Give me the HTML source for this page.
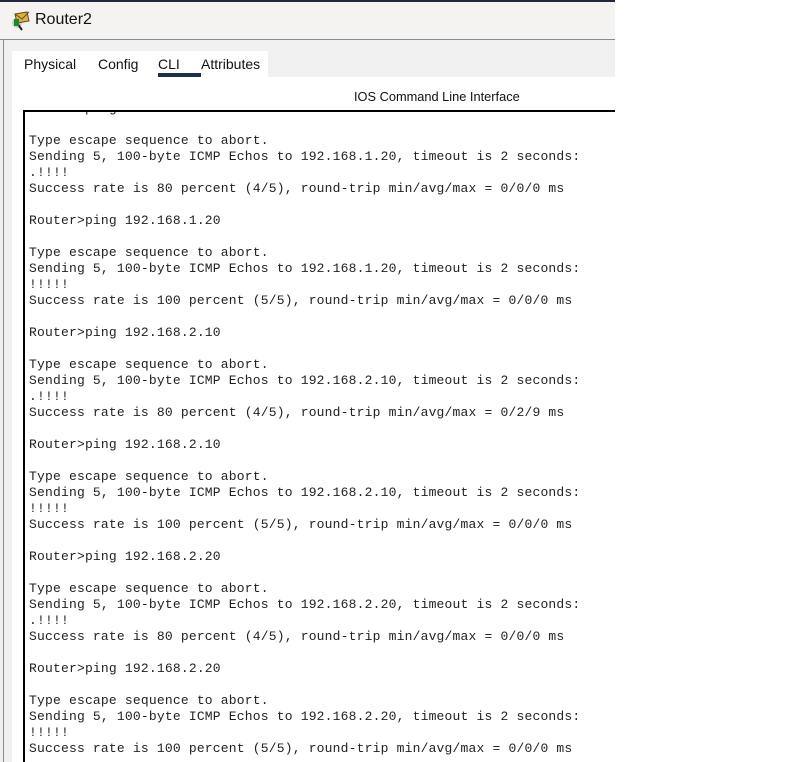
<!DOCTYPE html>
<html style="overflow:hidden"><head><style>
html,body{overflow:hidden}
body{margin:0;width:804px;height:762px;background:#fff;position:relative;overflow:hidden;font-family:"Liberation Sans",sans-serif}
.win{position:absolute;left:0;top:0;width:615px;height:762px;background:#f0f0f0;overflow:hidden}
.topb{position:absolute;left:0;top:0;width:615px;height:2px;background:#1f2a3c}
.title{position:absolute;left:0;top:2px;width:615px;height:37px;background:#f5f2f2;border-bottom:1px solid #8a8a8a}
.title span{position:absolute;left:35px;font-size:16px;color:#111}
.lb{position:absolute;left:3px;top:40px;width:1px;height:724px;background:#8a8a8a}
.tabs{position:absolute;left:12px;top:51px;width:256px;height:26px;background:#fff}
.tab{position:absolute;top:5px;font-size:14px;color:#111}
.ul{position:absolute;left:146px;top:22px;width:43px;height:4px;background:#1c2f4f}
.main{position:absolute;left:12px;top:77px;width:603px;height:686px;background:#fff}
.hdr{position:absolute;left:354px;top:89px;font-size:12.8px;color:#111}
.term{position:absolute;left:23px;top:110px;width:592px;height:660px;border-left:2px solid #000;border-top:2px solid #000;overflow:hidden}
pre{position:absolute;left:4px;top:-11px;margin:0;font-family:"Liberation Mono",monospace;font-size:13px;letter-spacing:0.19px;line-height:16px;color:#222}
</style></head><body>
<div class="win">
<div class="topb"></div>
<div class="title">
<svg style="position:absolute;left:9px;top:8px" width="22" height="22" viewBox="0 0 22 22"><circle cx="8" cy="13" r="5" fill="#ccc"/><path d="M8 13l5 7" stroke="#222" stroke-width="2"/><path d="M6 4l12-2 2 9-12 2z" fill="#d9b24a" stroke="#6b4a10"/><path d="M6 4l7 5 7-7" stroke="#6b4a10" fill="none"/><rect x="5" y="9" width="5" height="7" fill="#1a8a2a"/></svg>
<span style="top:9px">Router2</span></div>
<div class="lb"></div>
<div class="main"></div>
<div class="tabs">
<span class="tab" style="left:12px">Physical</span>
<span class="tab" style="left:86px">Config</span>
<span class="tab" style="left:146px">CLI</span>
<span class="tab" style="left:189px">Attributes</span>
<div class="ul"></div>
</div>
<div class="hdr">IOS Command Line Interface</div>
<div class="term"><pre>Router&gt;ping 192.168.1.20

Type escape sequence to abort.
Sending 5, 100-byte ICMP Echos to 192.168.1.20, timeout is 2 seconds:
.!!!!
Success rate is 80 percent (4/5), round-trip min/avg/max = 0/0/0 ms

Router&gt;ping 192.168.1.20

Type escape sequence to abort.
Sending 5, 100-byte ICMP Echos to 192.168.1.20, timeout is 2 seconds:
!!!!!
Success rate is 100 percent (5/5), round-trip min/avg/max = 0/0/0 ms

Router&gt;ping 192.168.2.10

Type escape sequence to abort.
Sending 5, 100-byte ICMP Echos to 192.168.2.10, timeout is 2 seconds:
.!!!!
Success rate is 80 percent (4/5), round-trip min/avg/max = 0/2/9 ms

Router&gt;ping 192.168.2.10

Type escape sequence to abort.
Sending 5, 100-byte ICMP Echos to 192.168.2.10, timeout is 2 seconds:
!!!!!
Success rate is 100 percent (5/5), round-trip min/avg/max = 0/0/0 ms

Router&gt;ping 192.168.2.20

Type escape sequence to abort.
Sending 5, 100-byte ICMP Echos to 192.168.2.20, timeout is 2 seconds:
.!!!!
Success rate is 80 percent (4/5), round-trip min/avg/max = 0/0/0 ms

Router&gt;ping 192.168.2.20

Type escape sequence to abort.
Sending 5, 100-byte ICMP Echos to 192.168.2.20, timeout is 2 seconds:
!!!!!
Success rate is 100 percent (5/5), round-trip min/avg/max = 0/0/0 ms
</pre></div>
</div>
</body></html>
